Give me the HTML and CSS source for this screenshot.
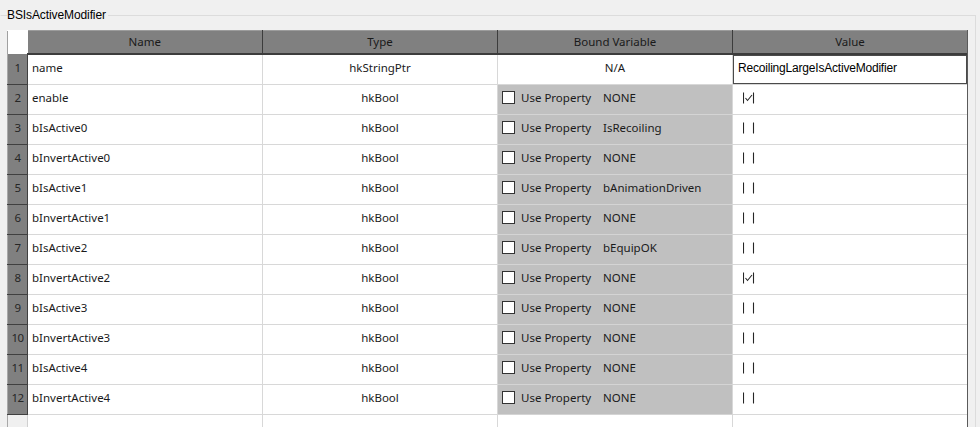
FILE: index.html
```html
<!DOCTYPE html>
<html lang="en">
<head>
  <meta charset="UTF-8">
  <title>BSIsActiveModifier</title>
  <link rel="stylesheet" href="styles.css">
</head>
<body>
  <fieldset class="group-box">
    <legend class="group-box__title">BSIsActiveModifier</legend>
    <div class="prop-view">
      <table class="prop-table">
        <thead>
          <tr>
            <th class="prop-table__corner"></th>
            <th>Name</th>
            <th>Type</th>
            <th>Bound Variable</th>
            <th>Value</th>
          </tr>
        </thead>
        <tbody id="prop_rows">
          <tr>
            <td class="row-num">1</td>
            <td class="cell-name">name</td>
            <td class="cell-type">hkStringPtr</td>
            <td class="cell-center">N/A</td>
            <td class="cell-edit"><input class="value-input" type="text" value="RecoilingLargeIsActiveModifier"></td>
          </tr>
        </tbody>
      </table>
    </div>
  </fieldset>

  <script>
    const boolProps = [
      ['enable', 'NONE', true],
      ['bIsActive0', 'IsRecoiling', false],
      ['bInvertActive0', 'NONE', false],
      ['bIsActive1', 'bAnimationDriven', false],
      ['bInvertActive1', 'NONE', false],
      ['bIsActive2', 'bEquipOK', false],
      ['bInvertActive2', 'NONE', true],
      ['bIsActive3', 'NONE', false],
      ['bInvertActive3', 'NONE', false],
      ['bIsActive4', 'NONE', false],
      ['bInvertActive4', 'NONE', false]
    ];

    function boolGlyph(checked) {
      const tick = checked ? '<polyline points="2.5,6 4.5,8.5 9,3" />' : '';
      return '<svg class="bool-glyph" width="12" height="12" viewBox="0 0 12 12">' +
        '<line x1="0.5" y1="0.5" x2="0.5" y2="11.5" />' +
        '<line x1="10.5" y1="0.5" x2="10.5" y2="11.5" />' + tick + '</svg>';
    }

    const body = document.getElementById('prop_rows');
    let html = '';
    boolProps.forEach((p, i) => {
      html += '<tr>' +
        '<td class="row-num">' + (i + 2) + '</td>' +
        '<td class="cell-name">' + p[0] + '</td>' +
        '<td class="cell-type">hkBool</td>' +
        '<td class="cell-bound"><div class="bound">' +
          '<input class="bound__check" type="checkbox">' +
          '<span class="bound__label">Use Property</span>' +
          '<span class="bound__var">' + p[1] + '</span>' +
        '</div></td>' +
        '<td class="cell-value">' + boolGlyph(p[2]) + '</td>' +
        '</tr>';
    });
    html += '<tr class="filler"><td class="row-num"></td><td></td><td></td><td></td><td></td></tr>';
    body.insertAdjacentHTML('beforeend', html);
  </script>
</body>
</html>
```

FILE: styles.css
```css
/* General styles */
html, body {
  margin: 0;
  height: 100%;
  overflow: hidden;
}

body {
  background: #f0f0f0;
  padding-top: 7px;
  box-sizing: border-box;
  font-family: "Noto Sans", "Open Sans", sans-serif;
  font-size: 11.5px;
  color: #1a1a1a;
}

.group-box {
  margin: 0 4px 0 0;
  padding: 7px 6px 0 6px;
  border: 1px solid #dcdcdc;
  border-left-color: #f0f0f0;
  border-bottom: 0;
  height: 100%;
  box-sizing: border-box;
  min-width: 0;
}

.group-box__title {
  padding: 0 2px 0 0;
  font-family: "Liberation Sans", sans-serif;
  font-size: 12px;
  line-height: 16px;
  color: #000;
  letter-spacing: -0.1px;
}

.prop-view {
  width: 961px;
  height: 397px;
  overflow: hidden;
  background: #fff;
  border-right: 1px solid #5a5a5a;
  box-sizing: border-box;
}

.prop-table {
  border-collapse: collapse;
  table-layout: fixed;
  width: 960px;
}

.prop-table th {
  width: 235px;
  height: 23px;
  padding: 0 0 1px 0;
  box-sizing: border-box;
  background: #808080;
  border-top: 1px solid #9c9c9c;
  border-right: 1px solid #3c3c3c;
  border-bottom: 2px solid #3c3c3c;
  font-weight: normal;
  color: #1a1a1a;
  text-align: center;
}

.prop-table th.prop-table__corner {
  width: 20px;
  background: #fff;
  border: 0;
  border-left: 1px solid #a0a0a0;
}

.prop-table td {
  height: 30px;
  padding: 0 0 3px 0;
  box-sizing: border-box;
  border-right: 1px solid #d8d8d8;
  border-bottom: 1px solid #d8d8d8;
  white-space: nowrap;
  overflow: hidden;
}

.prop-table td.row-num {
  background: #808080;
  border-left: 1px solid #a8a8a8;
  border-right: 1px solid #404040;
  border-bottom: 1px solid #404040;
  text-align: center;
  color: #262626;
  letter-spacing: -0.5px;
}

.cell-name {
  padding-left: 4px !important;
}

.cell-type,
.cell-center {
  text-align: center;
}

.cell-bound {
  background: #c0c0c0;
  border-bottom-color: #d4d4d4 !important;
}

.bound {
  display: flex;
  align-items: center;
  padding-left: 4px;
}

.bound__check {
  appearance: none;
  -webkit-appearance: none;
  margin: 0 6px 0 0;
  width: 13px;
  height: 13px;
  background: #fff;
  border: 1px solid #333;
  box-sizing: border-box;
}

.bound__label {
  width: 82px;
}

.prop-table td.cell-edit {
  padding: 0;
}

.value-input {
  display: block;
  width: 100%;
  height: 29px;
  margin: 0;
  padding: 0 0 2px 4px;
  box-sizing: border-box;
  border: 1px solid #4a4a4a;
  outline: 0;
  background: #fff;
  font-family: "Liberation Sans", sans-serif;
  font-size: 12px;
  letter-spacing: -0.2px;
  color: #000;
}

.cell-value {
  padding-left: 10px !important;
}

.bool-glyph {
  display: block;
  fill: none;
  stroke: #262626;
  stroke-width: 1.1;
}

.filler td {
  border-bottom: 0;
  height: 20px;
}

.prop-table .filler td.row-num {
  background: #f0f0f0;
  border-right: 1px solid #d0d0d0;
  border-bottom: 0;
}
```
